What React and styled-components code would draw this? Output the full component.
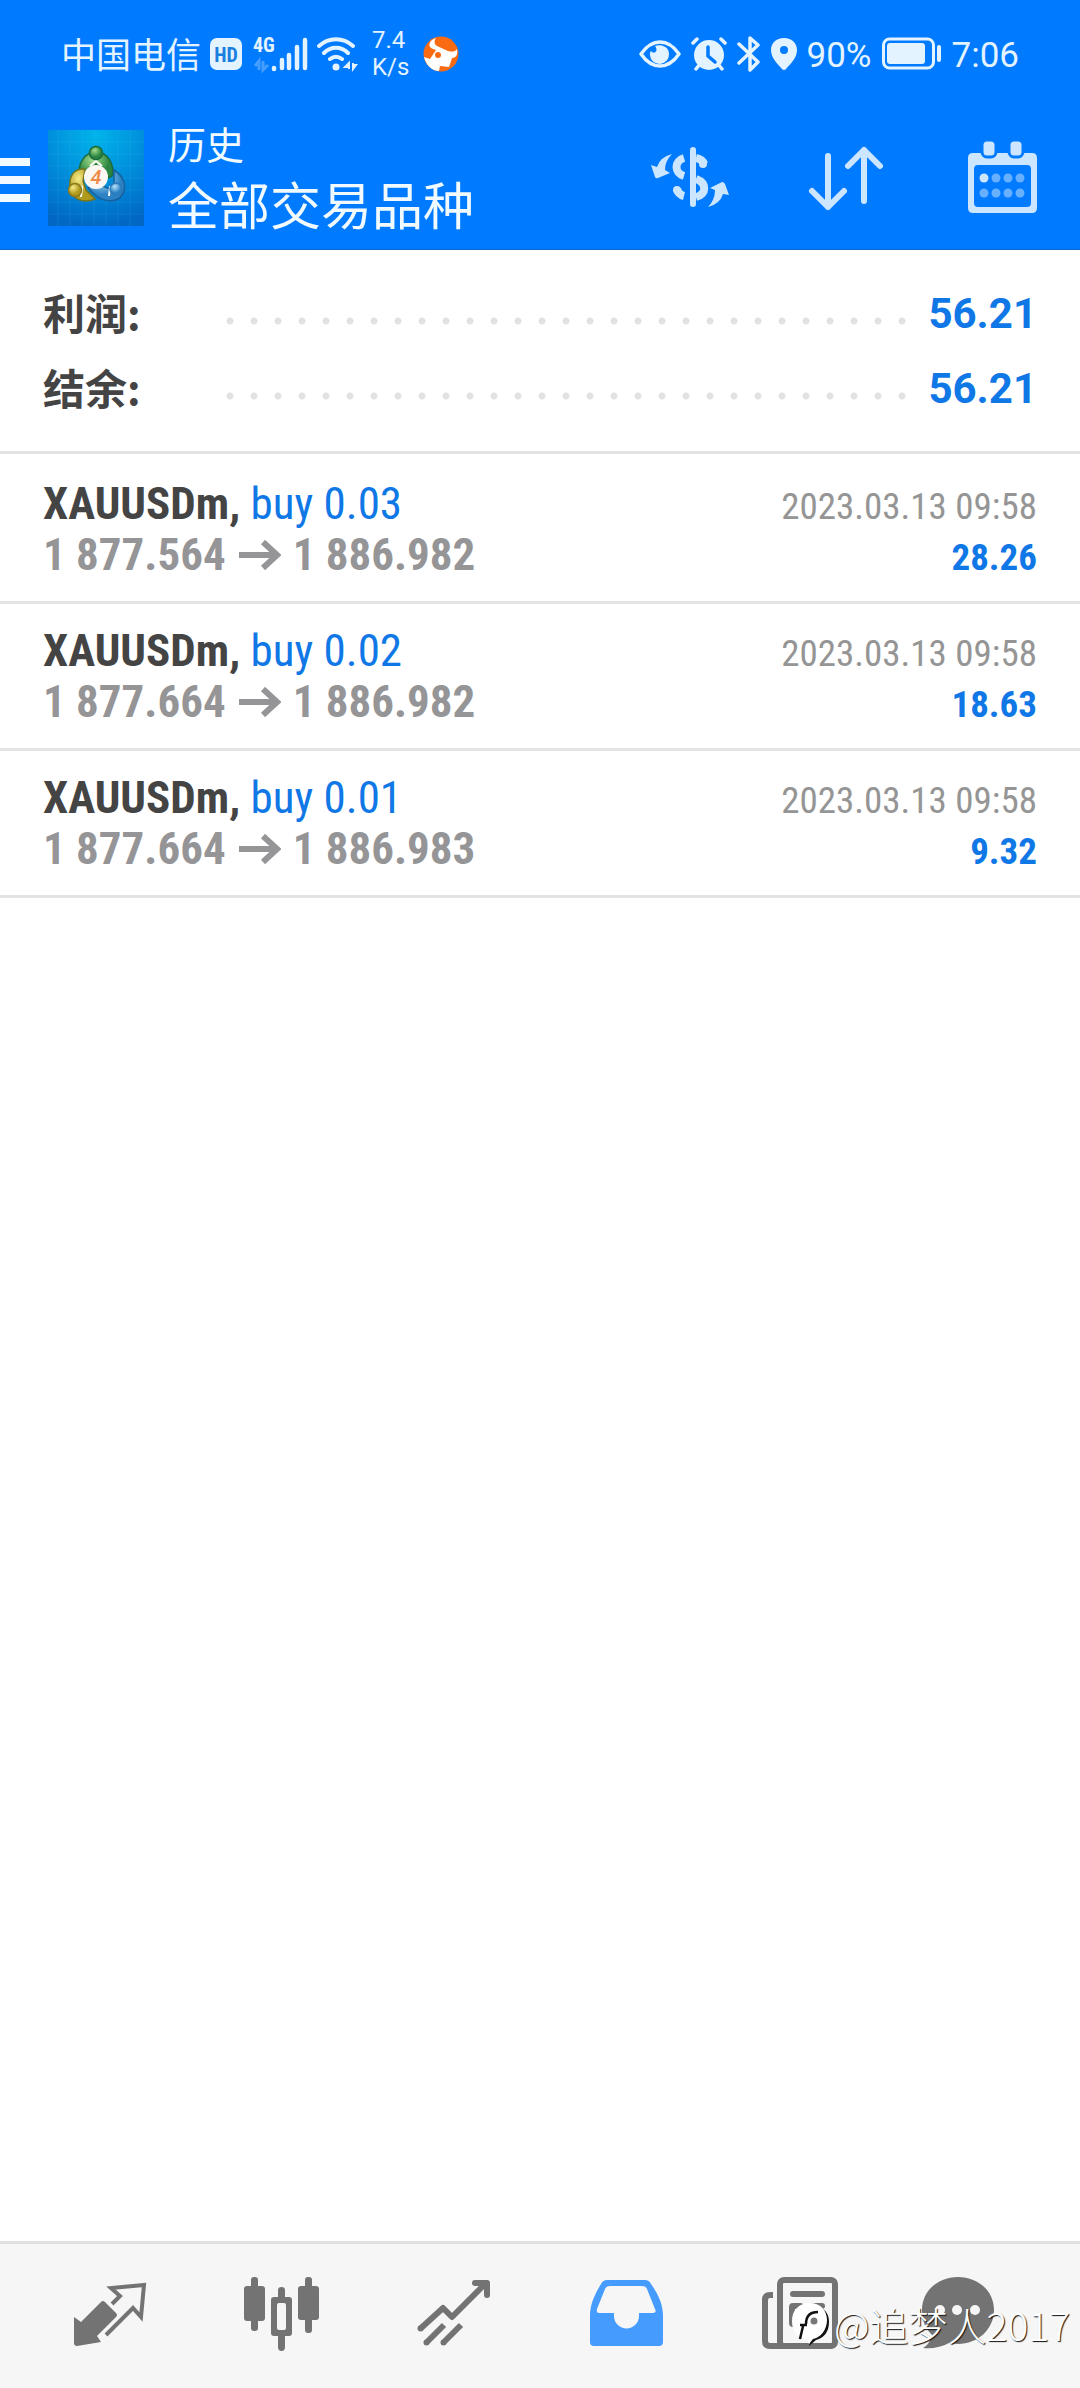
import React from 'react';
import styled, { createGlobalStyle, css } from 'styled-components';

const GlobalStyle = createGlobalStyle`
  * {
    box-sizing: border-box;
  }

  body {
    margin: 0;
    background-color: #fff;
    font-family: Roboto, 'Noto Sans CJK SC', sans-serif;
  }

  button {
    margin: 0;
    padding: 0;
    border: 0;
    background: none;
    font: inherit;
    color: inherit;
  }

  svg {
    display: block;
    flex: none;
  }
`;

const Page = styled.div`
  display: flex;
  flex-direction: column;
  min-height: 100vh;
`;

const Header = styled.header`
  background-color: #007aff;
  border-bottom: 1px solid #0a68cc;
  color: #f0faff;
`;

const StatusBar = styled.div`
  display: flex;
  align-items: center;
  justify-content: space-between;
  height: 107px;
  padding: 0 61px;
  color: #e3f3ff;
  font-size: 35px;
`;

const StatusGroup = styled.div`
  display: flex;
  align-items: center;
  gap: ${({ $gap }) => $gap}px;
`;

const Carrier = styled.span`
  padding-bottom: 3px;
  font-family: 'Noto Sans CJK SC', sans-serif;
`;

const StatusText = styled.span`
  padding-top: 3px;
`;

const Speed = styled.span`
  padding: 0 5px;
  font-size: 24px;
  line-height: 27px;
`;

const IconLabel = styled.text`
  font-family: 'Roboto Condensed', Roboto, sans-serif;
  font-size: 20px;
  font-weight: 700;
`;

const Toolbar = styled.div`
  display: flex;
  align-items: center;
  height: 142px;
  padding-right: 36px;
`;

const MenuButton = styled.button`
  display: flex;
  flex-direction: column;
  gap: 10px;
  margin-right: 18px;
  padding-top: 4px;

  > span {
    width: 30px;
    height: 8px;
    background-color: #f0faff;
  }
`;

const Titles = styled.div`
  flex: 1;
  margin-left: 24px;
  padding-bottom: 6px;
  font-family: 'Noto Sans CJK SC', sans-serif;
`;

const Title = styled.div`
  font-size: 38px;
  line-height: 56px;
`;

const Subtitle = styled.div`
  font-size: 51px;
  line-height: 64px;
`;

const Actions = styled.div`
  display: flex;
  gap: 72px;
  color: #cce6ff;
`;

const Summary = styled.section`
  padding: 26px 43px 25px;
  border-bottom: 3px solid #e3e3e3;
`;

const SummaryRow = styled.div`
  display: flex;
  align-items: center;
  height: 75px;
  font-weight: 700;
`;

const SummaryLabel = styled.span`
  width: 175px;
  padding-bottom: 4px;
  color: #444;
  font-family: 'Noto Sans CJK SC', sans-serif;
  font-size: 42px;
`;

const Dots = styled.span`
  flex: 1;
  height: 8px;
  margin-top: 14px;
  background: radial-gradient(circle, #e2e2e2 3px, transparent 4px) 0 0 / 24px 8px repeat-x;
`;

const SummaryValue = styled.span`
  width: 122px;
  color: #1078e6;
  font-size: 42px;
  text-align: right;
`;

const TradeList = styled.ul`
  flex: 1;
  margin: 0;
  padding: 3px 0 0;
  list-style: none;
`;

const Trade = styled.li`
  display: grid;
  grid-template-columns: 1fr auto;
  grid-auto-rows: 51px;
  align-items: baseline;
  padding: 21px 43px;
  border-bottom: 3px solid #e3e3e3;
  font-family: 'Roboto Condensed', Roboto, sans-serif;
  line-height: 51px;
`;

const Symbol = styled.div`
  color: #444;
  font-size: 45px;
  font-weight: 700;

  > span {
    color: #1078e6;
    font-weight: 400;
  }
`;

const Prices = styled.div`
  display: flex;
  align-items: center;
  gap: 12px;
  color: #959597;
  font-size: 45px;
  font-weight: 700;
`;

const Time = styled.time`
  color: #959595;
  font-size: 37px;
`;

const Profit = styled.div`
  color: #1078e6;
  font-size: 37px;
  font-weight: 700;
  text-align: right;
`;

const TabBar = styled.nav`
  position: relative;
  display: grid;
  grid-template-columns: repeat(6, 1fr);
  padding: 22px 24px 26px;
  border-top: 3px solid #e0e0e0;
  background-color: #f6f6f6;
`;

const Tab = styled.button`
  display: flex;
  justify-content: center;
  color: #737373;

  ${({ $active }) =>
    $active &&
    css`
      color: #469bff;
    `}
`;

const Watermark = styled.div`
  position: absolute;
  right: 10px;
  bottom: 36px;
  display: flex;
  align-items: center;
  gap: 4px;
  color: #fff;
  font-family: 'Noto Sans CJK SC', sans-serif;
  font-size: 39px;
  font-weight: 300;
  line-height: 56px;
  text-shadow: 1px 1px 1px #111;
`;

const HdIcon = () => (
  <svg width="33" height="32" viewBox="0 0 33 32">
    <rect x="0" y="0" width="32" height="32" rx="7" fill="currentColor" />
    <IconLabel x="16" y="24" textAnchor="middle" fill="#1b7fe0">HD</IconLabel>
  </svg>
);

const SignalIcon = () => (
  <svg width="56" height="48" viewBox="0 -6 56 48" fill="none" stroke="currentColor">
    <IconLabel x="1" y="16" fill="currentColor" stroke="none">4G</IconLabel>
    <path d="M7 34V25l-4 5M11 25v9l5-5" strokeWidth="3" opacity=".3" />
    <path d="M22 32v1M30 32V24M37 32V19M45 32V11M53 32V4" strokeWidth="4.5" strokeLinecap="round" />
  </svg>
);

const WifiIcon = () => (
  <svg width="41" height="36" viewBox="0 0 41 36" fill="none" stroke="currentColor">
    <path d="M2 10C12 1 26 1 36 10M7 17C14 10 24 10 31 17M13 23C17 20 21 20 25 23" strokeWidth="4" strokeLinecap="round" />
    <circle cx="19" cy="31" r="3.5" fill="currentColor" stroke="none" />
    <path d="M32 33v-6l-4 4h4M36 27v6l3-4h-3" strokeWidth="2" fill="currentColor" />
  </svg>
);

const BullIcon = () => (
  <svg width="36" height="36" viewBox="0 0 36 36">
    <circle cx="18" cy="18" r="17.5" fill="#f96a13" />
    <path
      d="M13 2C6 4 4 11 10 13l3 1-6 9-6-2c2 8 8 14 15 14l1-5 9 1 3-9c4 0 6-3 5-9-2 3-5 3-9 2L14 10c-3-2-3-5-1-8z"
      fill="#fff"
    />
    <circle cx="15" cy="19" r="3" fill="#f96a13" />
  </svg>
);

const EyeIcon = () => (
  <svg width="42" height="28" viewBox="0 0 42 28">
    <path d="M2 14C13-2 29-2 40 14 29 30 13 30 2 14z" fill="none" stroke="currentColor" strokeWidth="3.5" strokeLinejoin="round" />
    <path d="M16 6c5-2 14 0 14 8a9.5 9.5 0 0 1-19 1c0-2 0-3 1-4 3 4 8 0 4-5z" fill="currentColor" />
  </svg>
);

const AlarmIcon = () => (
  <svg width="36" height="34" viewBox="0 0 36 34" stroke="currentColor" strokeLinecap="round">
    <circle cx="18" cy="18" r="15" fill="currentColor" stroke="none" />
    <path d="M2 6l4-4M34 6l-4-4M5 32l4-5M31 32l-4-5" strokeWidth="3.5" />
    <path d="M17 10v9l7 6" fill="none" stroke="#007aff" strokeWidth="3.5" />
  </svg>
);

const BluetoothIcon = () => (
  <svg width="24" height="38" viewBox="0 0 24 38">
    <path
      d="M2 9l19 18-8 8V3l8 7L2 28"
      fill="none"
      stroke="currentColor"
      strokeWidth="3.5"
      strokeLinecap="round"
      strokeLinejoin="round"
    />
  </svg>
);

const PinIcon = () => (
  <svg width="26" height="32" viewBox="0 0 26 32">
    <path
      d="M13 0C5 0 0 5 0 12c0 8 6 13 11 19q2 2 4 0c5-6 11-11 11-19C26 5 21 0 13 0zm0 8a4 4 0 1 1 0 8 4 4 0 0 1 0-8z"
      fill="currentColor"
      fillRule="evenodd"
    />
  </svg>
);

const BatteryIcon = () => (
  <svg width="60" height="33" viewBox="0 0 60 33">
    <rect x="1.5" y="2" width="50" height="29" rx="6" fill="none" stroke="currentColor" strokeWidth="3" />
    <rect x="5" y="6" width="38" height="21" rx="3" fill="currentColor" />
    <rect x="55" y="8" width="4" height="17" rx="2" fill="currentColor" />
  </svg>
);

const LogoIcon = () => (
  <svg width="96" height="96" viewBox="0 0 96 96">
    <defs>
      <radialGradient id="sky" cx="50%" cy="5%" r="95%">
        <stop offset="0" stopColor="#00b4ea" />
        <stop offset=".5" stopColor="#0090dc" />
        <stop offset="1" stopColor="#0068c4" />
      </radialGradient>
      <radialGradient id="green" cx="40%" cy="30%">
        <stop offset="0" stopColor="#a5dc8e" />
        <stop offset="1" stopColor="#2a8640" />
      </radialGradient>
      <radialGradient id="yellow" cx="35%" cy="30%">
        <stop offset="0" stopColor="#f6ec86" />
        <stop offset="1" stopColor="#b09a1e" />
      </radialGradient>
      <radialGradient id="blue" cx="40%" cy="30%">
        <stop offset="0" stopColor="#b4e2fa" />
        <stop offset="1" stopColor="#2c82c4" />
      </radialGradient>
    </defs>
    <rect width="96" height="96" fill="url(#sky)" />
    <path
      d="M10 0v96M22 0v96M34 0v96M46 0v96M58 0v96M70 0v96M82 0v96M0 12h96M0 24h96M0 36h96M0 48h96M0 60h96M0 72h96M0 84h96"
      stroke="#5fd0f5"
      strokeWidth="1"
      opacity=".12"
    />
    <g strokeWidth="1.5">
      <path d="M32 45C29 34 37 22 48 22c12 0 19 13 16 24l-8 4-8-16-9 14z" fill="url(#green)" stroke="#1d6b3c" />
      <path d="M66 40c9 5 14 17 8 25-5 8-19 8-29-2l-5-5 10-4 14 6 2-8z" fill="url(#blue)" stroke="#18609c" />
      <path d="M37 39c-12-1-16 8-15 18 1 12 13 17 25 12l-9-9-3-9z" fill="url(#yellow)" stroke="#75751d" />
      <path d="M42 36l6-5 6 5M29 55l5 2-1 10M61 66l1-9 7-3" fill="none" stroke="#fff" strokeWidth="2" />
      <circle cx="48" cy="23" r="6.5" fill="url(#green)" stroke="#1d6b3c" />
      <circle cx="27" cy="60" r="6.5" fill="url(#yellow)" stroke="#8a7a1d" />
      <circle cx="68" cy="59" r="6" fill="url(#blue)" stroke="#2c7ab8" />
    </g>
    <circle cx="48" cy="47" r="12" fill="#fbf8f3" />
    <text x="48" y="54" textAnchor="middle" fontSize="20" fontStyle="italic" fontWeight="500" fill="#ee8a48">4</text>
  </svg>
);

const CurrencyIcon = () => (
  <svg width="84" height="84" viewBox="0 0 84 84" fill="none" stroke="currentColor">
    <path d="M45 14v54" strokeWidth="6" strokeLinecap="round" />
    <path d="M36 22c-10 3-10 15 0 18M36 60c-4-1-6-3-7-7M48 22c5 1 7 3 8 6M48 43c11 4 11 15 0 18" strokeWidth="8" />
    <circle cx="29" cy="54" r="4" fill="currentColor" stroke="none" />
    <circle cx="55" cy="28" r="4" fill="currentColor" stroke="none" />
    <g fill="currentColor" stroke="none">
      <path d="M24 18Q12 21 9 31L3 29 7 41Q8 43 10 42L22 37 17 34Q17 25 24 18z" />
      <path d="M60 71Q72 68 75 58L81 59 77 48Q76 46 74 46L62 52 67 54Q67 64 60 71z" />
    </g>
  </svg>
);

const SortIcon = () => (
  <svg width="84" height="84" viewBox="0 0 84 84" fill="none" stroke="currentColor" strokeWidth="6" strokeLinecap="round" strokeLinejoin="round">
    <path d="M24 20v51M8 55l16 16 16-16" />
    <path d="M60 65V14M44 30l16-16 16 16" />
  </svg>
);

const CalendarIcon = () => (
  <svg width="84" height="84" viewBox="0 0 84 84" fill="currentColor">
    <path
      d="M13 17h59q5 0 5 5v50q0 5-5 5H13q-5 0-5-5V22q0-5 5-5zm5 12q-4 0-4 4v34q0 4 4 4h49q4 0 4-4V33q0-4-4-4z"
      fillRule="evenodd"
    />
    <rect x="22" y="4" width="14" height="17" rx="5" stroke="#007aff" strokeWidth="3" />
    <rect x="49" y="4" width="14" height="17" rx="5" stroke="#007aff" strokeWidth="3" />
    <circle cx="24" cy="42" r="4.5" />
    <g opacity=".5">
      <circle cx="36" cy="42" r="4.5" />
      <circle cx="48" cy="42" r="4.5" />
      <circle cx="60" cy="42" r="4.5" />
      <circle cx="24" cy="57" r="4.5" />
      <circle cx="36" cy="57" r="4.5" />
      <circle cx="48" cy="57" r="4.5" />
      <circle cx="60" cy="57" r="4.5" />
    </g>
  </svg>
);

const ArrowIcon = () => (
  <svg width="43" height="30" viewBox="0 0 43 30" fill="none" stroke="currentColor" strokeWidth="6">
    <path d="M1 15h37M25 2l14 13-14 13" />
  </svg>
);

const QuotesIcon = () => (
  <svg width="96" height="96" viewBox="0 0 96 96">
    <path
      d="M12 51l7 5 20-20q2-2 4 0l11 11q2 2 0 4L35 70l4 6-24 4q-3 0-3-3z"
      fill="currentColor"
    />
    <path d="M50 38l8-8-9-8 33-3-3 32-8-9-27 27" fill="none" stroke="currentColor" strokeWidth="4" />
  </svg>
);

const ChartsIcon = () => (
  <svg width="96" height="96" viewBox="0 0 96 96" fill="currentColor">
    <rect x="10" y="20" width="21" height="35" rx="3" />
    <rect x="17" y="11" width="7" height="54" rx="3" />
    <path d="M40 31h15q3 0 3 3v33q0 3-3 3H40q-3 0-3-3V34q0-3 3-3zm5 6q-2 0-2 2v23q0 2 2 2h5q2 0 2-2V39q0-2-2-2z" fillRule="evenodd" />
    <path d="M44 32v-8q0-3 3.5-3t3.5 3v8zM44 69v12q0 4 3.5 4t3.5-4V69z" />
    <rect x="64" y="20" width="21" height="34" rx="3" />
    <rect x="71" y="11" width="7" height="56" rx="3" />
  </svg>
);

const TradeIcon = () => (
  <svg width="96" height="96" viewBox="0 0 96 96" fill="none" stroke="currentColor" strokeWidth="6">
    <path d="M14 63l23-21 9 9 33-33" strokeLinejoin="round" />
    <path d="M69 17h12v12" strokeLinecap="round" strokeLinejoin="round" />
    <path d="M20 77l18-18M37 77l18-18" />
    <g fill="currentColor" stroke="none">
      <circle cx="14.5" cy="62.5" r="3" />
      <circle cx="20.5" cy="76.5" r="3" />
      <circle cx="37.5" cy="76.5" r="3" />
    </g>
  </svg>
);

const InboxIcon = () => (
  <svg width="96" height="96" viewBox="0 0 96 96">
    <path
      d="M29 14h38q4 0 6 4c7 10 12 20 12 32v26q0 4-4 4H16q-4 0-4-4V50c0-12 5-22 11-32q2-4 6-4zm3 6q-4 0-5 3l-8 20q-1 4 2 4h15v3a12 12 0 0 0 25 0v-3h14q4 0 2-4l-8-20q-1-3-5-3z"
      fill="currentColor"
      fillRule="evenodd"
    />
  </svg>
);

const NewsIcon = () => (
  <svg width="96" height="96" viewBox="0 0 96 96" fill="none" stroke="currentColor" strokeWidth="6">
    <rect x="30" y="14" width="55" height="66" rx="4" />
    <path d="M23 29h-3q-5 0-5 5v41q0 5 5 5h14" />
    <path d="M43 28h29M63 40h9M63 52h9" strokeLinecap="round" />
    <rect x="42" y="40" width="9" height="18" rx="1" />
  </svg>
);

const ChatIcon = () => (
  <svg width="96" height="96" viewBox="0 0 96 96">
    <path d="M36 11c20 0 36 14 36 33S56 78 36 78l-9-1c-7 4-17 6-26 5 5-3 8-8 9-13C3 62 0 54 0 44 0 25 16 11 36 11z" fill="currentColor" />
    <g fill="#f6f6f6">
      <circle cx="18" cy="44" r="5" />
      <circle cx="35" cy="44" r="5" />
      <circle cx="53" cy="44" r="5" />
    </g>
  </svg>
);

const MarkIcon = () => (
  <svg width="38" height="44" viewBox="0 0 38 44">
    <path d="M22 4c10 1 15 7 15 16 0 10-5 16-13 18l-7 6 1-6" fill="#111" />
    <path d="M18 1C28 1 35 8 35 18S28 36 21 37l-4 5-2-5C6 36 0 30 0 19S7 1 18 1z" fill="#fff" />
    <path d="M8 37l3-13M8 23h7M14 22c0-8 4-12 12-12" fill="none" stroke="#111" strokeWidth="2.5" />
    <circle cx="22" cy="19" r="3.5" fill="#777" />
  </svg>
);

const summary = [
  { label: '利润:', value: '56.21' },
  { label: '结余:', value: '56.21' },
];

const trades = [
  { id: 1, symbol: 'XAUUSDm', side: 'buy 0.03', open: '1 877.564', close: '1 886.982', time: '2023.03.13 09:58', profit: '28.26' },
  { id: 2, symbol: 'XAUUSDm', side: 'buy 0.02', open: '1 877.664', close: '1 886.982', time: '2023.03.13 09:58', profit: '18.63' },
  { id: 3, symbol: 'XAUUSDm', side: 'buy 0.01', open: '1 877.664', close: '1 886.983', time: '2023.03.13 09:58', profit: '9.32' },
];

const tabs = [
  { name: 'quotes', Icon: QuotesIcon },
  { name: 'charts', Icon: ChartsIcon },
  { name: 'trade', Icon: TradeIcon },
  { name: 'history', Icon: InboxIcon, active: true },
  { name: 'news', Icon: NewsIcon },
  { name: 'messages', Icon: ChatIcon },
];

function App() {
  return (
    <Page>
      <GlobalStyle />
      <Header>
        <StatusBar>
          <StatusGroup $gap={9}>
            <Carrier>中国电信</Carrier>
            <HdIcon />
            <SignalIcon />
            <WifiIcon />
            <Speed>
              7.4
              <br />
              K/s
            </Speed>
            <BullIcon />
          </StatusGroup>
          <StatusGroup $gap={10}>
            <EyeIcon />
            <AlarmIcon />
            <BluetoothIcon />
            <PinIcon />
            <StatusText>90%</StatusText>
            <BatteryIcon />
            <StatusText>7:06</StatusText>
          </StatusGroup>
        </StatusBar>
        <Toolbar>
          <MenuButton type="button" aria-label="menu">
            <span />
            <span />
            <span />
          </MenuButton>
          <LogoIcon />
          <Titles>
            <Title>历史</Title>
            <Subtitle>全部交易品种</Subtitle>
          </Titles>
          <Actions>
            <button type="button" aria-label="currency">
              <CurrencyIcon />
            </button>
            <button type="button" aria-label="sort">
              <SortIcon />
            </button>
            <button type="button" aria-label="calendar">
              <CalendarIcon />
            </button>
          </Actions>
        </Toolbar>
      </Header>
      <Summary>
        {summary.map(({ label, value }) => (
          <SummaryRow key={label}>
            <SummaryLabel>{label}</SummaryLabel>
            <Dots />
            <SummaryValue>{value}</SummaryValue>
          </SummaryRow>
        ))}
      </Summary>
      <TradeList>
        {trades.map((trade) => (
          <Trade key={trade.id}>
            <Symbol>
              {trade.symbol}, <span>{trade.side}</span>
            </Symbol>
            <Time>{trade.time}</Time>
            <Prices>
              {trade.open}
              <ArrowIcon />
              {trade.close}
            </Prices>
            <Profit>{trade.profit}</Profit>
          </Trade>
        ))}
      </TradeList>
      <TabBar>
        {tabs.map(({ name, Icon, active }) => (
          <Tab key={name} type="button" aria-label={name} $active={active}>
            <Icon />
          </Tab>
        ))}
        <Watermark>
          <MarkIcon />
          <span>@追梦人2017</span>
        </Watermark>
      </TabBar>
    </Page>
  );
}

export default App;
